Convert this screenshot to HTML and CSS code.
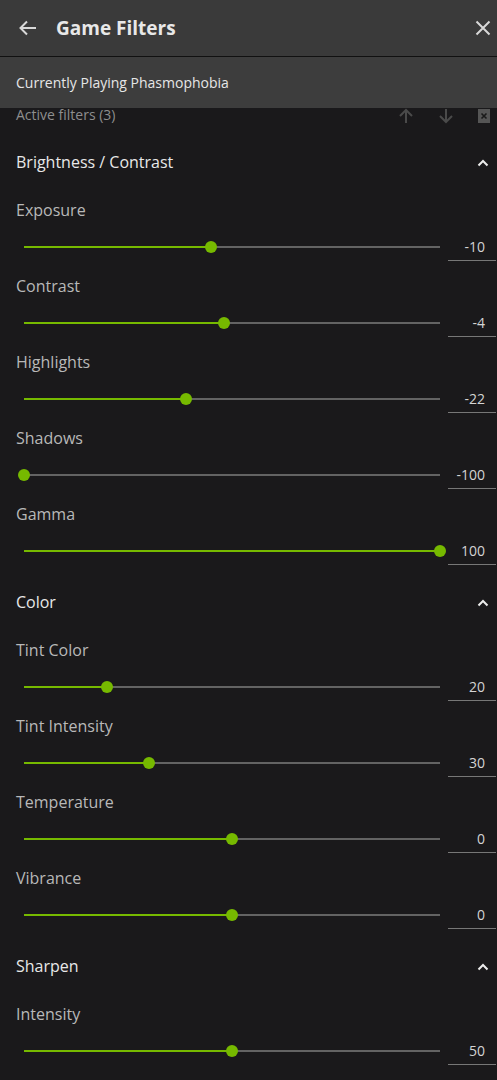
FILE: index.html
```html
<!DOCTYPE html>
<html lang="en">
<head>
<meta charset="utf-8">
<title>Game Filters</title>
<link rel="stylesheet" href="styles.css">
</head>
<body>
<div class="app">
  <header class="topbar">
    <svg class="icon back" width="18" height="16" viewBox="0 0 18 16"><path d="M17 8H2M8 1.5L1.5 8 8 14.5" fill="none" stroke="#d8d8d8" stroke-width="2"/></svg>
    <h1 class="title">Game Filters</h1>
    <svg class="icon close" width="16" height="16" viewBox="0 0 16 16"><path d="M1.5 1.5l13 13M14.5 1.5l-13 13" fill="none" stroke="#d8d8d8" stroke-width="2"/></svg>
  </header>
  <div class="playing">Currently Playing Phasmophobia</div>
  <div class="active">
    <span class="active-label">Active filters (3)</span>
    <div class="active-tools">
      <svg width="16" height="16" viewBox="0 0 16 16"><path d="M8 15V2M2 8l6-6 6 6" fill="none" stroke="#4a4a4a" stroke-width="2"/></svg>
      <svg width="16" height="16" viewBox="0 0 16 16"><path d="M8 1v13M2 8l6 6 6-6" fill="none" stroke="#4a4a4a" stroke-width="2"/></svg>
      <svg width="12" height="14" viewBox="0 0 12 14"><rect x="0" y="0" width="12" height="14" fill="#555"/><path d="M3.5 4.5l5 5M8.5 4.5l-5 5" stroke="#1a1a1a" stroke-width="1.6"/></svg>
    </div>
  </div>

  <section class="group">
    <div class="group-head"><span>Brightness / Contrast</span><svg class="chev" width="12" height="8" viewBox="0 0 12 8"><path d="M1.5 6.5L6 2l4.5 4.5" fill="none" stroke="#ececec" stroke-width="2"/></svg></div>
    <div class="row"><div class="label">Exposure</div><div class="ctrl"><div class="track"><div class="fill" style="width:44.95%"></div><div class="knob" style="left:44.95%"></div></div><div class="value">-10</div></div></div>
    <div class="row"><div class="label">Contrast</div><div class="ctrl"><div class="track"><div class="fill" style="width:48%"></div><div class="knob" style="left:48%"></div></div><div class="value">-4</div></div></div>
    <div class="row"><div class="label">Highlights</div><div class="ctrl"><div class="track"><div class="fill" style="width:39%"></div><div class="knob" style="left:39%"></div></div><div class="value">-22</div></div></div>
    <div class="row"><div class="label">Shadows</div><div class="ctrl"><div class="track"><div class="fill" style="width:0%"></div><div class="knob" style="left:0%"></div></div><div class="value">-100</div></div></div>
    <div class="row"><div class="label">Gamma</div><div class="ctrl"><div class="track"><div class="fill" style="width:100%"></div><div class="knob" style="left:100%"></div></div><div class="value">100</div></div></div>
  </section>

  <section class="group">
    <div class="group-head"><span>Color</span><svg class="chev" width="12" height="8" viewBox="0 0 12 8"><path d="M1.5 6.5L6 2l4.5 4.5" fill="none" stroke="#ececec" stroke-width="2"/></svg></div>
    <div class="row"><div class="label">Tint Color</div><div class="ctrl"><div class="track"><div class="fill" style="width:20%"></div><div class="knob" style="left:20%"></div></div><div class="value">20</div></div></div>
    <div class="row"><div class="label">Tint Intensity</div><div class="ctrl"><div class="track"><div class="fill" style="width:30%"></div><div class="knob" style="left:30%"></div></div><div class="value">30</div></div></div>
    <div class="row"><div class="label">Temperature</div><div class="ctrl"><div class="track"><div class="fill" style="width:50%"></div><div class="knob" style="left:50%"></div></div><div class="value">0</div></div></div>
    <div class="row"><div class="label">Vibrance</div><div class="ctrl"><div class="track"><div class="fill" style="width:50%"></div><div class="knob" style="left:50%"></div></div><div class="value">0</div></div></div>
  </section>

  <section class="group">
    <div class="group-head"><span>Sharpen</span><svg class="chev" width="12" height="8" viewBox="0 0 12 8"><path d="M1.5 6.5L6 2l4.5 4.5" fill="none" stroke="#ececec" stroke-width="2"/></svg></div>
    <div class="row"><div class="label">Intensity</div><div class="ctrl"><div class="track"><div class="fill" style="width:50%"></div><div class="knob" style="left:50%"></div></div><div class="value">50</div></div></div>
  </section>
</div>
</body>
</html>
```

FILE: styles.css
```css
* { box-sizing: border-box; margin: 0; padding: 0; }
html, body { background: #1a191b; }
body {
  font-family: "Open Sans", "Noto Sans", sans-serif;
  color: #d0d0d0;
  width: 497px;
  height: 1080px;
  overflow: hidden;
}
.app { display: flex; flex-direction: column; }
.topbar {
  height: 57px;
  background: #3a3a3a;
  border-bottom: 1px solid #111;
  display: flex;
  align-items: center;
  padding: 0 6px 0 19px;
}
.back { margin-right: 19px; }
.title {
  flex: 1;
  font-size: 19px;
  font-weight: 700;
  color: #e8e8e8;
}
.playing {
  height: 51px;
  background: #3d3d3d;
  display: flex;
  align-items: center;
  padding-left: 16px;
  font-size: 14px;
  color: #e6e6e6;
}
.active {
  height: 32px;
  display: flex;
  align-items: flex-start;
  justify-content: space-between;
  padding: 0 7px 0 16px;
}
.active-label { font-size: 14px; color: #8e8e8e; line-height: 16px; margin-top: -1px; }
.active-tools { display: flex; align-items: center; gap: 24px; }
.group { display: flex; flex-direction: column; }
.group-head {
  height: 60px;
  display: flex;
  align-items: flex-start;
  justify-content: space-between;
  padding: 12px 8px 0 16px;
  font-size: 16px;
  line-height: 20px;
  color: #e8e8e8;
}
.chev { margin-top: 7px; }
.row { height: 76px; display: flex; flex-direction: column; }
.label {
  height: 20px;
  line-height: 20px;
  padding-left: 16px;
  font-size: 16px;
  color: #b8b8b8;
}
.ctrl {
  margin-top: 7px;
  height: 40px;
  display: flex;
  align-items: center;
  padding: 0 1px 0 24px;
  gap: 8px;
}
.track {
  position: relative;
  flex: 1;
  height: 2px;
  background: #636363;
}
.fill { height: 2px; background: #76b900; }
.knob {
  position: absolute;
  top: -5px;
  width: 12px;
  height: 12px;
  margin-left: -6px;
  border-radius: 50%;
  background: #76b900;
}
.value {
  width: 48px;
  height: 27px;
  border-bottom: 1px solid #777;
  text-align: right;
  padding-right: 11px;
  font-size: 14px;
  line-height: 26px;
  color: #d4d4d4;
}
```
